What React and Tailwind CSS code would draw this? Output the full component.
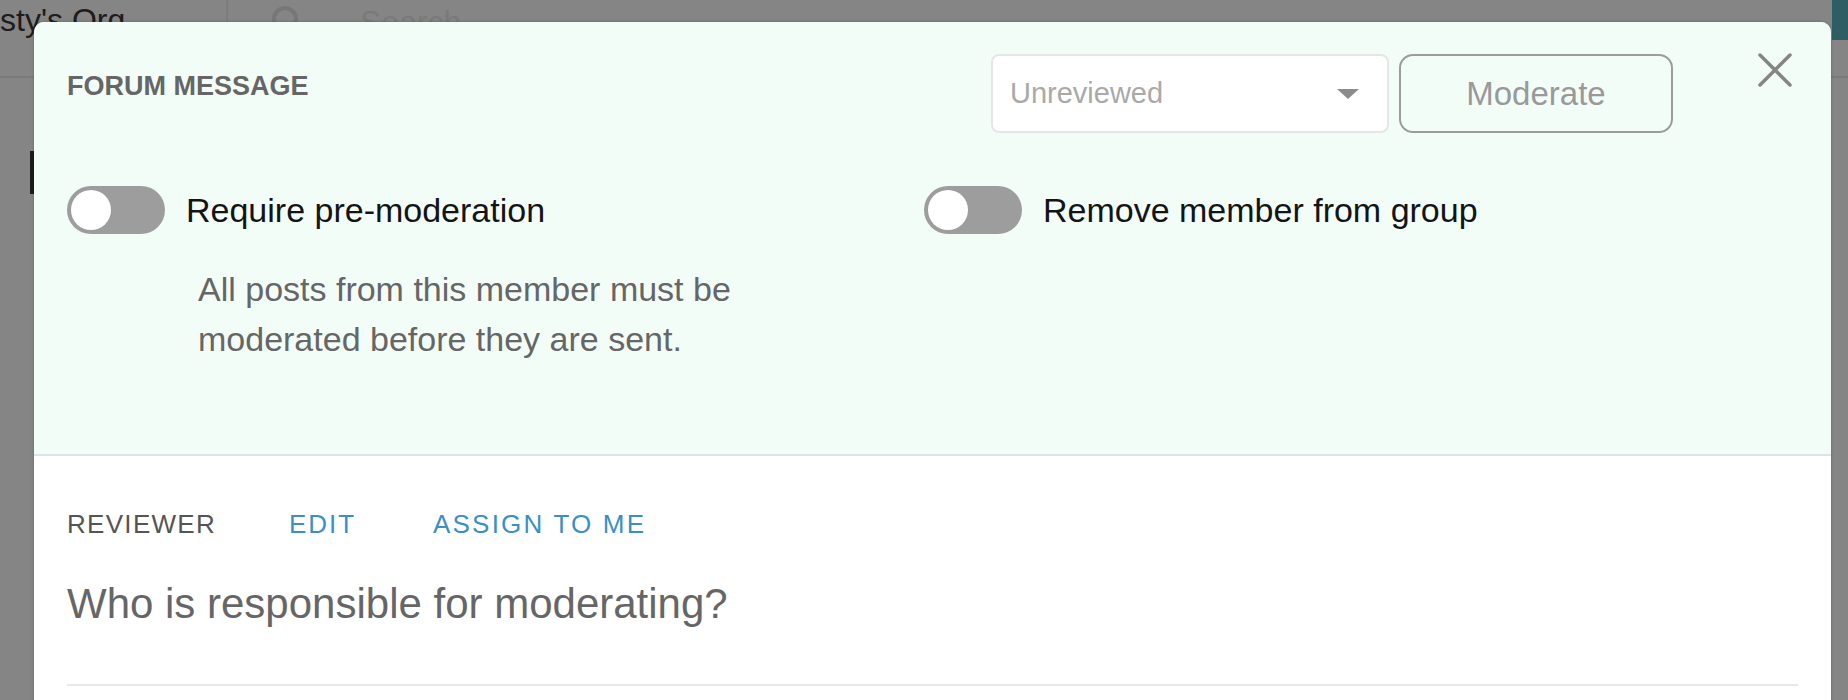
import React from 'react';

const Toggle = () => (
  <div className="flex h-[48px] w-[98px] shrink-0 items-center rounded-full bg-[#9d9d9d]">
    <div className="ml-[4px] h-[40px] w-[40px] rounded-full bg-white" />
  </div>
);

const App = () => {
  return (
    <div className="relative h-[700px] w-full overflow-hidden bg-[#858585] font-['Liberation_Sans',Arial,sans-serif]">
      {/* Page behind the overlay */}
      <div className="flex h-[78px] border-b-2 border-[#7a7a7a]">
        <div className="w-[228px] shrink-0 overflow-hidden whitespace-nowrap border-r-2 border-[#7c7c7c] text-[32px] leading-[40px] text-[#1d1d1d]">
          sty's Org
        </div>
        <div className="flex items-start pl-[42px] pt-[4px]">
          <svg width="30" height="30" viewBox="0 0 30 30" fill="none" stroke="#777777" strokeWidth="4">
            <circle cx="15" cy="15" r="11" />
          </svg>
          <span className="ml-[60px] text-[32px] leading-[36px] text-[#7a7a7a]">Search</span>
        </div>
        <div className="ml-auto h-[40px] w-[16px] bg-[#2f5d64]" />
      </div>
      <div className="ml-[30px] mt-[73px] h-[43px] w-[6px] bg-[#1c1c1c]" />

      {/* Modal */}
      <div className="absolute left-[34px] top-[22px] w-[1797px] overflow-hidden rounded-t-[10px] bg-white shadow-[0_0_3px_rgba(0,0,0,0.25)]">
        {/* Header section */}
        <div className="border-b-2 border-[#dde3ea] bg-[#f3fdf8] px-[33px] pb-[90px] pt-[32px]">
          <div className="flex items-start">
            <div className="mt-[16px] flex-1 text-[27px] font-bold leading-[32px] text-[#666666]">
              FORUM MESSAGE
            </div>
            <div className="flex h-[79px] w-[398px] items-center justify-between rounded-[8px] border-2 border-[#e6e6e6] bg-white pl-[17px] pr-[28px]">
              <span className="text-[29px] text-[#a9a9a9]">Unreviewed</span>
              <svg width="22" height="10" viewBox="0 0 22 10">
                <path d="M0 0 L22 0 L11 10 Z" fill="#8c8c8c" />
              </svg>
            </div>
            <button className="ml-[10px] flex h-[79px] w-[274px] items-center justify-center rounded-[14px] border-2 border-[#9a9d9b] text-[33px] text-[#999999]">
              Moderate
            </button>
            <svg className="ml-[85px] mr-[6px] -mt-[1px]" width="34" height="34" viewBox="0 0 34 34" stroke="#858585" strokeWidth="3.5" strokeLinecap="round">
              <path d="M2 2 L32 32 M32 2 L2 32" />
            </svg>
          </div>

          <div className="mt-[53px] flex">
            <div className="w-[857px] shrink-0">
              <div className="flex items-center">
                <Toggle />
                <span className="ml-[21px] text-[34px] leading-[48px] text-[#141414]">Require pre-moderation</span>
              </div>
              <p className="mt-[30px] pl-[131px] text-[34px] leading-[50px] text-[#666666]">
                All posts from this member must be
                <br />
                moderated before they are sent.
              </p>
            </div>
            <div className="flex h-[48px] items-center">
              <Toggle />
              <span className="ml-[21px] text-[34px] leading-[48px] text-[#141414]">Remove member from group</span>
            </div>
          </div>
        </div>

        {/* Reviewer section */}
        <div className="bg-white px-[33px] pt-[52px]">
          <div className="flex text-[26px] uppercase leading-[32px]">
            <span className="w-[222px] tracking-[1.3px] text-[#555555]">Reviewer</span>
            <span className="w-[144px] tracking-[2px] text-[#3b8fc4]">Edit</span>
            <span className="tracking-[2.2px] text-[#3b8fc4]">Assign to me</span>
          </div>
          <div className="mt-[39px] text-[42px] leading-[50px] text-[#666666]">
            Who is responsible for moderating?
          </div>
          <div className="mt-[55px] h-[2px] bg-[#e8e8e8]" />
          <div className="h-[40px]" />
        </div>
      </div>
    </div>
  );
};

export default App;
